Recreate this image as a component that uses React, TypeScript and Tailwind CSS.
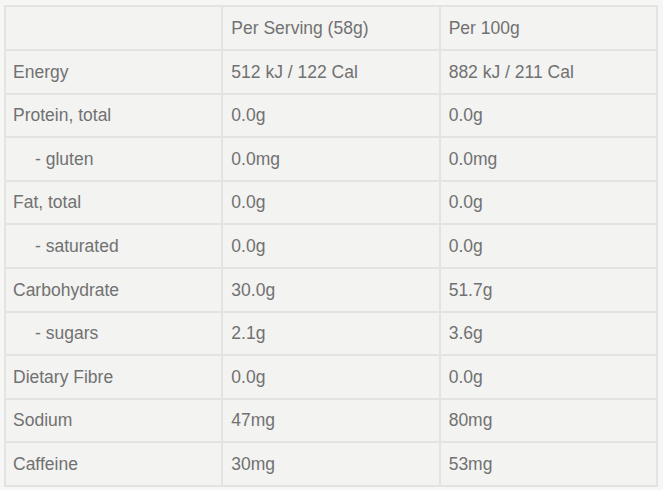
const rows: { label: string; serving: string; per100: string; sub?: boolean }[] = [
  { label: 'Energy', serving: '512 kJ / 122 Cal', per100: '882 kJ / 211 Cal' },
  { label: 'Protein, total', serving: '0.0g', per100: '0.0g' },
  { label: '- gluten', serving: '0.0mg', per100: '0.0mg', sub: true },
  { label: 'Fat, total', serving: '0.0g', per100: '0.0g' },
  { label: '- saturated', serving: '0.0g', per100: '0.0g', sub: true },
  { label: 'Carbohydrate', serving: '30.0g', per100: '51.7g' },
  { label: '- sugars', serving: '2.1g', per100: '3.6g', sub: true },
  { label: 'Dietary Fibre', serving: '0.0g', per100: '0.0g' },
  { label: 'Sodium', serving: '47mg', per100: '80mg' },
  { label: 'Caffeine', serving: '30mg', per100: '53mg' },
];

export default function App() {
  return (
    <div className="w-[663px] h-[490px] bg-[#f6f6f5] pt-[5px] pl-[4px] font-['Liberation_Sans',Arial,sans-serif] text-[17.5px] text-[#717171]">
      <table className="w-[654px] border-collapse table-fixed bg-[#f3f3f2]">
        <thead>
          <tr className="h-[44px]">
            <th className="border-2 border-[#e3e3e2] pl-[7px] text-left font-normal"></th>
            <th className="border-2 border-[#e3e3e2] pl-[8px] text-left font-normal">Per Serving (58g)</th>
            <th className="border-2 border-[#e3e3e2] pl-[8px] text-left font-normal">Per 100g</th>
          </tr>
        </thead>
        <tbody>
          {rows.map((r) => (
            <tr key={r.label} className="h-[43.6px]">
              <td className={`border-2 border-[#e3e3e2] ${r.sub ? 'pl-[29px]' : 'pl-[7px]'}`}>{r.label}</td>
              <td className="border-2 border-[#e3e3e2] pl-[8px]">{r.serving}</td>
              <td className="border-2 border-[#e3e3e2] pl-[8px]">{r.per100}</td>
            </tr>
          ))}
        </tbody>
      </table>
    </div>
  );
}
